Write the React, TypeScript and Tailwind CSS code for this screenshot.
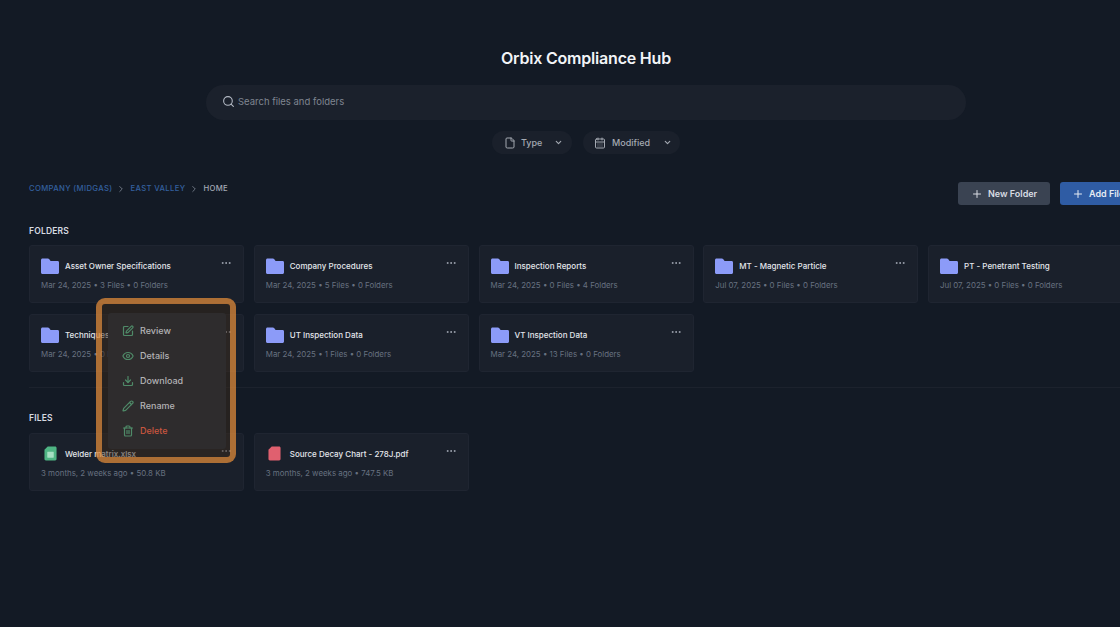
import { CalendarDays, ChevronDown, ChevronRight, Download, Eye, File, MoreHorizontal, Pencil, Plus, Search, SquarePen, Trash2 } from "lucide-react";

interface Item {
  name: string;
  meta: string;
}

const folders: Item[] = [
  { name: "Asset Owner Specifications", meta: "Mar 24, 2025 • 3 Files • 0 Folders" },
  { name: "Company Procedures", meta: "Mar 24, 2025 • 5 Files • 0 Folders" },
  { name: "Inspection Reports", meta: "Mar 24, 2025 • 0 Files • 4 Folders" },
  { name: "MT - Magnetic Particle", meta: "Jul 07, 2025 • 0 Files • 0 Folders" },
  { name: "PT - Penetrant Testing", meta: "Jul 07, 2025 • 0 Files • 0 Folders" },
  { name: "Techniques", meta: "Mar 24, 2025 • 0 Files • 0 Folders" },
  { name: "UT Inspection Data", meta: "Mar 24, 2025 • 1 Files • 0 Folders" },
  { name: "VT Inspection Data", meta: "Mar 24, 2025 • 13 Files • 0 Folders" },
];

const menuItems = [
  { label: "Review", icon: SquarePen },
  { label: "Details", icon: Eye },
  { label: "Download", icon: Download },
  { label: "Rename", icon: Pencil },
  { label: "Delete", icon: Trash2 },
];

function FolderIcon() {
  return (
    <svg viewBox="0 0 18 16" className="h-[16px] w-[18px] shrink-0">
      <path d="M1.5 0.5h5.4c.5 0 .9.2 1.2.6l1.5 1.9h7c.8 0 1.4.6 1.4 1.4v10c0 .8-.7 1.5-1.5 1.5h-15c-.8 0-1.5-.7-1.5-1.5V2c0-.8.7-1.5 1.5-1.5z" fill="#8c9bf8" />
    </svg>
  );
}

function SheetIcon({ color, inner }: { color: string; inner?: string }) {
  return (
    <svg viewBox="0 0 14 16" className="h-[15px] w-[13px] shrink-0">
      <path d="M4 0.5h8c.8 0 1.5.7 1.5 1.5v12c0 .8-.7 1.5-1.5 1.5H2c-.8 0-1.5-.7-1.5-1.5V4z" fill={color} />
      {inner && <rect x="3.5" y="6" width="7" height="6.5" rx="0.5" fill={inner} />}
    </svg>
  );
}

function Card({ item, icon }: { item: Item; icon: React.ReactNode }) {
  return (
    <div className="relative flex h-[58px] w-[215px] shrink-0 flex-col rounded-[3px] border border-[#1f2531] bg-[#1a202b] pl-[11px] pt-[12px]">
      <div className="flex h-[16px] items-center gap-[6px]">
        <span className="flex w-[18px] shrink-0 justify-center">{icon}</span>
        <span className="whitespace-nowrap text-[8px] font-medium leading-[12px] text-[#e4e7ec]">{item.name}</span>
      </div>
      <p className="mt-[5px] whitespace-nowrap text-[7.9px] leading-[12px] text-[#677180]">{item.meta}</p>
      <MoreHorizontal className="absolute right-[11px] top-[11px] h-[12px] w-[12px] text-[#a0a6b2]" />
    </div>
  );
}

export default function App() {
  return (
    <div className="relative h-[627px] w-[1120px] overflow-hidden bg-[#131a25] font-['Inter',sans-serif]">
      <div className="flex w-[1172px] flex-col px-[29px]">
        <h1 className="mt-[48px] h-[20px] text-center text-[16px] font-semibold leading-[20px] tracking-[-0.2px] text-[#f2f4f7]">
          Orbix Compliance Hub
        </h1>

        {/* Search */}
        <div className="mx-auto mt-[17px] flex h-[35px] w-[760px] items-center gap-[3px] rounded-full bg-[#1b212c] pl-[16px]">
          <Search className="mb-[2px] h-[13px] w-[13px] text-[#b4bac5]" />
          <span className="text-[9.5px] text-[#7f8590]">Search files and folders</span>
        </div>

        {/* Filters */}
        <div className="ml-[463px] mt-[11px] flex gap-[11px]">
          <div className="flex h-[23px] w-[80px] items-center rounded-full bg-[#1a202b] pl-[12px] text-[9px] font-medium text-[#a4a9b2]">
            <File className="h-[12px] w-[12px] text-[#a4a9b2]" />
            <span className="ml-[5px]">Type</span>
            <ChevronDown className="ml-[12px] h-[9px] w-[9px]" strokeWidth={3} />
          </div>
          <div className="flex h-[23px] w-[97px] items-center rounded-full bg-[#1a202b] pl-[11px] text-[9px] font-medium text-[#a4a9b2]">
            <CalendarDays className="h-[12px] w-[12px] text-[#a4a9b2]" />
            <span className="ml-[6px]">Modified</span>
            <ChevronDown className="ml-[13px] h-[9px] w-[9px]" strokeWidth={3} />
          </div>
        </div>

        {/* Breadcrumb + actions */}
        <div className="mt-[28px] flex h-[23px] items-start justify-between">
          <div className="mt-[1px] flex h-[11px] items-center text-[7.7px] font-medium tracking-[0.35px]">
            <span className="text-[#33609f]">COMPANY (MIDGAS)</span>
            <ChevronRight className="mx-[4px] h-[10px] w-[10px] text-[#7d8593]" />
            <span className="text-[#33609f]">EAST VALLEY</span>
            <ChevronRight className="mx-[4px] h-[10px] w-[10px] text-[#7d8593]" />
            <span className="text-[#a4aab5]">HOME</span>
          </div>
          <div className="flex gap-[10px]">
            <button className="flex h-[23px] w-[92px] items-center gap-[5px] rounded-[3px] bg-[#3a4352] pl-[13px] text-[9px] font-semibold text-[#d8dce3]">
              <Plus className="h-[12px] w-[12px]" />
              New Folder
            </button>
            <button className="flex h-[23px] w-[83px] items-center gap-[5px] rounded-[3px] bg-[#2f5ca4] pl-[12px] text-[9px] font-semibold text-[#e6ebf3]">
              <Plus className="h-[12px] w-[12px]" />
              Add File
            </button>
          </div>
        </div>

        {/* Folders */}
        <h2 className="mt-[20px] h-[12px] text-[8.5px] font-semibold leading-[12px] tracking-[0.2px] text-[#d7dbe2]">FOLDERS</h2>
        <div className="mt-[8px] grid w-[1115px] grid-cols-[repeat(5,215px)] gap-x-[9.75px] gap-y-[10.5px]">
          {folders.map((f) => (
            <Card key={f.name} item={f} icon={<FolderIcon />} />
          ))}
        </div>

        <div className="mt-[15.5px] h-px w-[1143px] bg-[#1c222d]" />

        {/* Files */}
        <h2 className="mt-[24px] h-[12px] text-[8.5px] font-semibold leading-[12px] tracking-[0.2px] text-[#d7dbe2]">FILES</h2>
        <div className="mt-[8.5px] flex gap-[9.75px]">
          <Card item={{ name: "Welder matrix.xlsx", meta: "3 months, 2 weeks ago • 50.8 KB" }} icon={<SheetIcon color="#4fb584" inner="#a6e0c3" />} />
          <Card item={{ name: "Source Decay Chart - 278J.pdf", meta: "3 months, 2 weeks ago • 747.5 KB" }} icon={<SheetIcon color="#e0606f" />} />
        </div>
      </div>

      {/* Highlighted context menu */}
      <div className="absolute left-[96px] top-[298px] h-[165px] w-[140px] rounded-[9px] border-[6px] border-[#df893a]/75 bg-[#3a2a1c]/50 bg-clip-padding">
        <div className="ml-[6px] mt-[9px] flex h-[136px] w-[118px] flex-col rounded-[3px] bg-[#2e2c2d] pl-[14px] pt-[5px]">
          {menuItems.map(({ label, icon: Icon }) => (
            <div key={label} className="flex h-[25px] shrink-0 items-center gap-[6px]">
              <Icon className="h-[12px] w-[12px] text-[#4f8a68]" strokeWidth={2.4} />
              <span className={label === "Delete" ? "text-[9px] font-medium text-[#c9563f]" : "text-[9px] font-medium text-[#b3b3b5]"}>{label}</span>
            </div>
          ))}
        </div>
      </div>
    </div>
  );
}
